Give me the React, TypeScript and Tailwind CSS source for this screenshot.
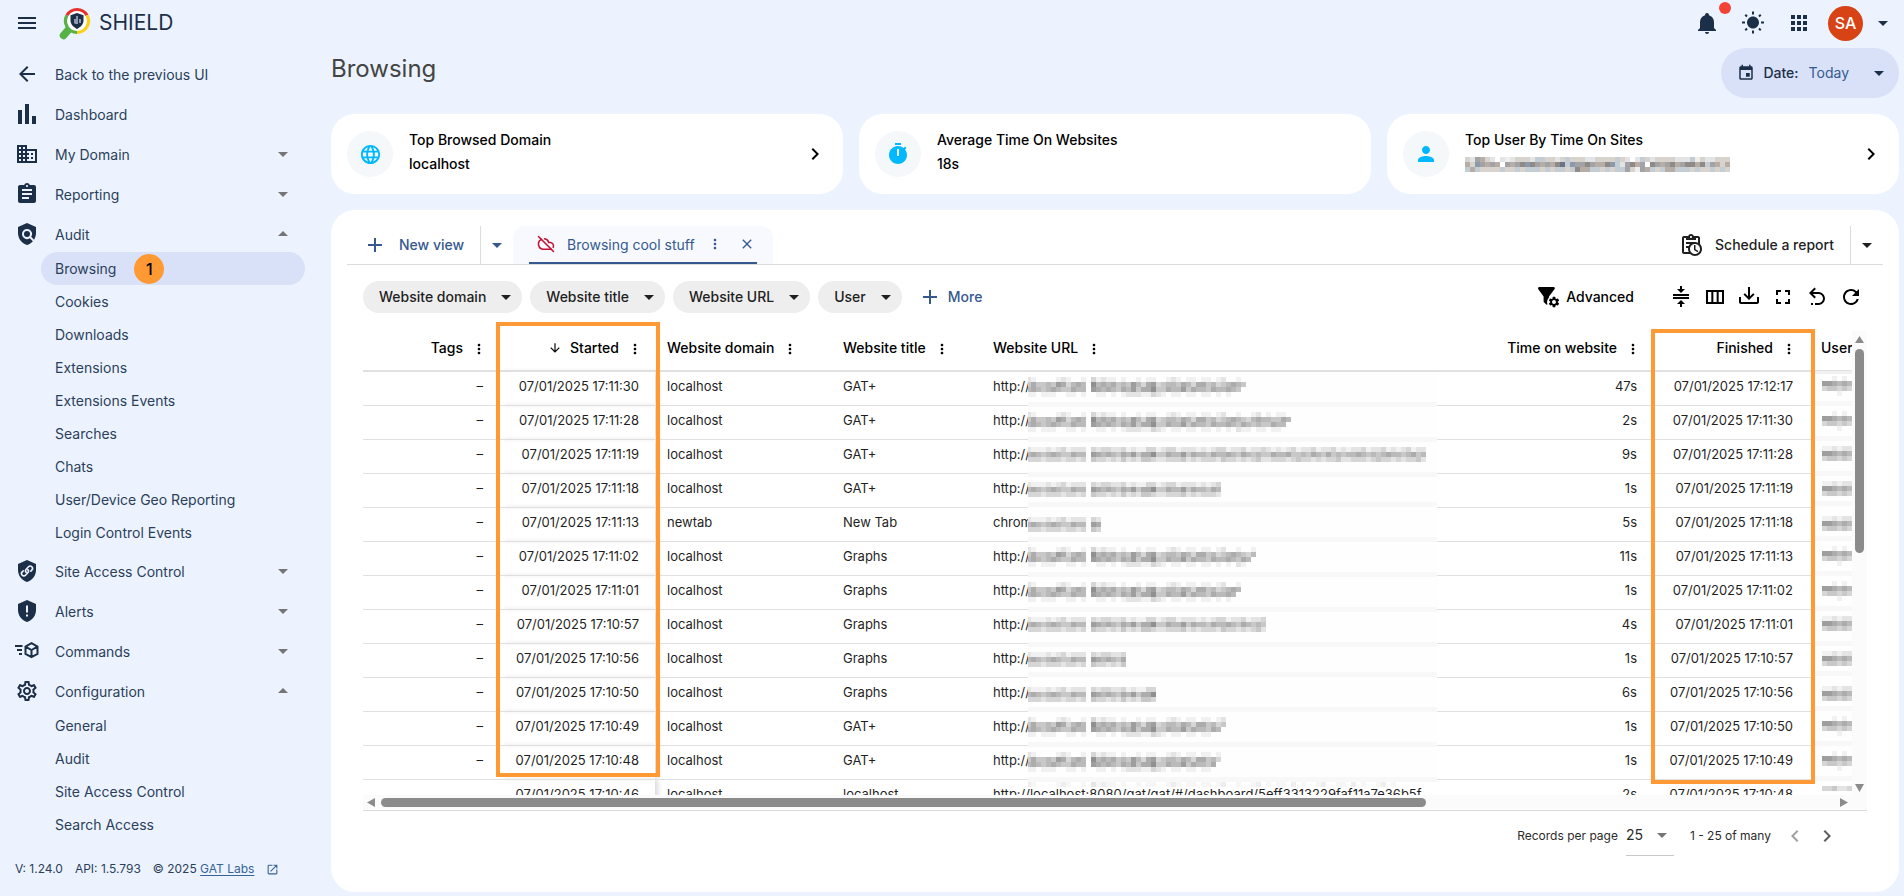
import type { ReactNode } from "react";
import {
  MdApps,
  MdArrowBack,
  MdArrowDownward,
  MdArrowDropDown,
  MdArrowDropUp,
  MdAssignment,
  MdChevronLeft,
  MdChevronRight,
  MdClose,
  MdDomain,
  MdEvent,
  MdFullscreen,
  MdLanguage,
  MdMenu,
  MdMoreVert,
  MdOpenInNew,
  MdOutlineSettings,
  MdOutlineViewColumn,
  MdPerson,
  MdPolicy,
  MdRefresh,
  MdSettings,
  MdWbSunny,
  MdAdd,
} from "react-icons/md";
import { CloudOff } from "lucide-react";

const paths = {
  bell: "M21,19V20H3V19L5,17V11C5,7.9 7.03,5.17 10,4.29C10,4.19 10,4.1 10,4A2,2 0 0,1 12,2A2,2 0 0,1 14,4C14,4.1 14,4.19 14,4.29C16.97,5.17 19,7.9 19,11V17L21,19M14,21A2,2 0 0,1 12,23A2,2 0 0,1 10,21",
  bars: "M3 8h4v14H3zM10 2h4v20h-4zM17 14h4v8h-4z",
  timer:
    "M19.03 7.39L20.45 5.97C20 5.46 19.55 5 19.04 4.56L17.62 6C16.07 4.74 14.12 4 12 4C7.03 4 3 8.03 3 13C3 17.97 7.02 22 12 22C17 22 21 17.97 21 13C21 10.88 20.26 8.93 19.03 7.39M13 14H11V7H13V14M15 1H9V3H15V1Z",
  clipboardClock:
    "M21 11.11V5C21 3.9 20.11 3 19 3H14.82C14.4 1.84 13.3 1 12 1S9.6 1.84 9.18 3H5C3.9 3 3 3.9 3 5V19C3 20.11 3.9 21 5 21H11.11C12.37 22.24 14.09 23 16 23C19.87 23 23 19.87 23 16C23 14.09 22.24 12.37 21 11.11M12 3C12.55 3 13 3.45 13 4S12.55 5 12 5 11 4.55 11 4 11.45 3 12 3M5 19V5H7V7H17V5H19V9.68C18.09 9.25 17.08 9 16 9H7V11H11.1C10.5 11.57 10.04 12.25 9.68 13H7V15H9.08C9.03 15.33 9 15.66 9 16C9 17.08 9.25 18.09 9.68 19H5M16 21C13.24 21 11 18.76 11 16S13.24 11 16 11 21 13.24 21 16 18.76 21 16 21M16.5 16.25L19.36 17.94L18.61 19.16L15 17V12H16.5V16.25Z",
  collapse:
    "M4,12H20V14H4V12M4,9H20V11H4V9M16,4L12,8L8,4H11V1H13V4H16M8,19L12,15L16,19H13V22H11V19H8Z",
  tray: "M2 12H4V17H20V12H22V17C22 18.11 21.11 19 20 19H4C2.9 19 2 18.11 2 17V12M12 15L17.55 9.54L16.13 8.13L13 11.25V2H11V11.25L7.88 8.13L6.46 9.55L12 15Z",
  undo: "M13.5,7A6.5,6.5 0 0,1 20,13.5A6.5,6.5 0 0,1 13.5,20H10V18H13.5C16,18 18,16 18,13.5C18,11 16,9 13.5,9H7.83L10.91,12.09L9.5,13.5L4,8L9.5,2.5L10.92,3.91L7.83,7H13.5M6,18H8V20H6V18Z",
};

function PathIcon({ d }: { d: string }) {
  return (
    <svg viewBox="0 0 24 24" className="size-6 shrink-0" fill="currentColor" aria-hidden="true">
      <path d={d} />
    </svg>
  );
}

function ShieldIcon({ children }: { children: ReactNode }) {
  return (
    <svg viewBox="0 0 24 24" className="size-6 shrink-0" aria-hidden="true">
      <path d="M12 1 3 5v6c0 5.55 3.84 10.74 9 12 5.16-1.26 9-6.45 9-12V5z" fill="currentColor" />
      {children}
    </svg>
  );
}

const linkShield = (
  <ShieldIcon>
    <g fill="none" stroke="#ecf3ff" strokeWidth="1.6" strokeLinecap="round">
      <path d="M11.2 13.4a2.3 2.3 0 0 1 0-3.2l2.3-2.4a2.3 2.3 0 0 1 3.3 3.3l-1 1" />
      <path d="M12.8 10.6a2.3 2.3 0 0 1 0 3.2l-2.3 2.4a2.3 2.3 0 0 1-3.3-3.3l1-1" />
    </g>
  </ShieldIcon>
);

const alertShield = (
  <ShieldIcon>
    <path d="M11 6.500h2v7h-2zM11 15.500h2v2h-2z" fill="#ecf3ff" />
  </ShieldIcon>
);

const commandsIcon = (
  <svg viewBox="0 0 24 24" className="size-6 shrink-0" fill="none" stroke="currentColor" strokeWidth="2" aria-hidden="true">
    <path d="M0 7h7.500M2 11h5M4 15h3" />
    <path d="M16.500 4.200 22.500 7.500v7.300l-6 3.400-6-3.400V7.500zM10.500 7.500l6 3.500 6-3.500M16.500 11v7" />
  </svg>
);

const filterIcon = (
  <svg viewBox="0 0 24 24" className="size-6 shrink-0" fill="currentColor" aria-hidden="true">
    <path d="M2 3.500C2 2.600 2.600 2 3.400 2h14.200c1.100 0 1.700 1.200 1 2.100L13 11.400v1.200a7 7 0 0 0-1.600 6.800c-.5.400-1 .300-1.400-.1l-2-2a1.200 1.200 0 0 1-.4-1v-4.900L2.300 4.300z" />
    <svg x="11.500" y="10.500" width="13" height="13" viewBox="0 0 24 24">
      <MdSettings size={24} />
    </svg>
  </svg>
);

function Logo() {
  return (
    <svg viewBox="0 0 32 34" className="h-[34px] w-8" fill="none" aria-hidden="true">
      <path d="M4.500 29.500 11 22" stroke="#57b246" strokeWidth="7.500" strokeLinecap="round" />
      <circle cx="18" cy="15" r="11" fill="#fff" />
      <path d="M18 26.500A11.500 11.500 0 0 1 8 9.300" stroke="#57b246" strokeWidth="3.200" />
      <path d="M8 9.300A11.500 11.500 0 0 1 28 9.300" stroke="#e5322d" strokeWidth="3.200" />
      <path d="M28 9.300A11.500 11.500 0 0 1 18 26.500" stroke="#fbd116" strokeWidth="3.200" />
      <path d="m18 7 6.500 2.300v5.200c0 3.700-2.800 6.500-6.500 8.500-3.700-2-6.500-4.800-6.500-8.500V9.300z" fill="#1b2f49" />
      <path d="M15 17v-4h2v-3h2v8h-3zM20 13h2v4h-2z" fill="#8b9aae" />
    </svg>
  );
}

type NavItem = {
  label: string;
  icon: ReactNode;
  open?: boolean;
  children?: string[];
};

const nav: NavItem[] = [
  { label: "Back to the previous UI", icon: <MdArrowBack size={24} /> },
  { label: "Dashboard", icon: <PathIcon d={paths.bars} /> },
  { label: "My Domain", icon: <MdDomain size={24} />, open: false },
  { label: "Reporting", icon: <MdAssignment size={24} />, open: false },
  {
    label: "Audit",
    icon: <MdPolicy size={24} />,
    open: true,
    children: [
      "Browsing",
      "Cookies",
      "Downloads",
      "Extensions",
      "Extensions Events",
      "Searches",
      "Chats",
      "User/Device Geo Reporting",
      "Login Control Events",
    ],
  },
  { label: "Site Access Control", icon: linkShield, open: false },
  { label: "Alerts", icon: alertShield, open: false },
  { label: "Commands", icon: commandsIcon, open: false },
  {
    label: "Configuration",
    icon: <MdOutlineSettings size={24} />,
    open: true,
    children: ["General", "Audit", "Site Access Control", "Search Access"],
  },
];

function Sidebar() {
  return (
    <aside className="w-[331px] shrink-0 pr-[26px] text-sm text-[#2b3f5a]">
      <nav className="pt-1.5">
        {nav.map((item) => (
          <div key={item.label} className="pt-1">
            <button className="flex h-9 w-full items-center gap-4 pr-2.5 pl-[15px] text-left">
              <span className="text-[#1b2f49]">{item.icon}</span>
              <span className="flex-1 pt-0.5">{item.label}</span>
              {item.open === true && <MdArrowDropUp size={24} className="text-[#757575]" />}
              {item.open === false && <MdArrowDropDown size={24} className="text-[#757575]" />}
            </button>
            {item.children?.map((child) => (
              <a
                key={child}
                href="#"
                className={
                  child === "Browsing"
                    ? "ml-[41px] flex h-[33px] items-center gap-[18px] rounded-full bg-[#d8e1f8] pl-3.5"
                    : "ml-[41px] flex h-[33px] items-center pl-3.5"
                }
              >
                {child}
                {child === "Browsing" && (
                  <span className="flex size-[30px] items-center justify-center rounded-full bg-[#ff9933] text-base font-medium text-black">
                    1
                  </span>
                )}
              </a>
            ))}
          </div>
        ))}
      </nav>
      <footer className="flex items-center gap-3 pt-5 pl-[15px] text-xs leading-4">
        <span>V: 1.24.0</span>
        <span>API: 1.5.793</span>
        <span>
          © 2025{" "}
          <a href="#" className="text-[#35639b] underline underline-offset-2">
            GAT Labs
          </a>
        </span>
        <MdOpenInNew size={13} className="text-[#35639b]" />
      </footer>
    </aside>
  );
}

function TopBar() {
  return (
    <header className="flex h-[46px] items-center pr-[9px] pl-[15px] text-[#1b2f49]">
      <button aria-label="Menu">
        <MdMenu size={24} />
      </button>
      <div className="ml-5 flex items-center gap-2">
        <Logo />
        <span className="text-[21px]">SHIELD</span>
      </div>
      <div className="ml-auto flex items-center gap-[22px]">
        <button aria-label="Notifications" className="relative">
          <PathIcon d={paths.bell} />
          <span className="absolute -top-[9px] left-6 size-3 rounded-full bg-[#f44336]" />
        </button>
        <button aria-label="Theme">
          <MdWbSunny size={24} />
        </button>
        <button aria-label="Apps">
          <MdApps size={24} />
        </button>
      </div>
      <button className="ml-[17px] flex items-center gap-2">
        <span className="flex size-[35px] items-center justify-center rounded-full bg-[#d84315] text-base font-medium text-white">
          SA
        </span>
        <MdArrowDropDown size={24} />
      </button>
    </header>
  );
}

// Shades of the pixelated blocks, 0 = blank, 9 = darkest
const shadeTop = "21000012100103121101001011001210110110120010012010110201001200110201001201000000";
const shadeMidA = "46445476356508565645475367345546536645345654356554465563456347465554654754655746";
const shadeMidB = "56545654465507656546574668446557465546556546545446556445465464545565454565545645";
const shadeLow = "11011100110100110101222113210110110110101021101101102011010110110110110110110110";
// Softer edge rows for lines where the text falls on a single block row
const shadeSoftTop = "21112123122203233223121133123312221212331223122321212312231223121223122312123122";
const shadeSoftLow = "33323332332304332324232443223334232333243323234223332343323233422333234332323342";
const shadeFill = [
  "#ffffff",
  "#f1f1f1",
  "#e4e4e4",
  "#d6d6d6",
  "#c8c8c8",
  "#bababa",
  "#acacac",
  "#9e9e9e",
  "#909090",
  "#848484",
];

// Block rows are 5px high
const redactedUrls = [
  { row: 1, length: 44 },
  { row: 8, length: 53 },
  { row: 15, length: 80, soft: true },
  { row: 22, length: 39, soft: true },
  { row: 29, length: 15, soft: true },
  { row: 35, length: 46 },
  { row: 42, length: 43 },
  { row: 49, length: 48, soft: true },
  { row: 56, length: 20, soft: true },
  { row: 63, length: 26, soft: true },
  { row: 69, length: 40 },
  { row: 76, length: 39 },
];
const bandRows = [6, 13, 20, 26, 33, 40, 47, 54, 60, 67, 74, 81];

function blockRow(pattern: string, row: number, length: number, key: string) {
  return Array.from({ length }, (_, i) => {
    const shade = Number(pattern[i % pattern.length]);
    if (shade === 0) return null;
    return <rect key={key + i} x={i * 5} y={row * 5} width="5" height="5" fill={shadeFill[shade]} />;
  });
}

function UrlMask() {
  return (
    <svg
      width="409"
      height="423"
      viewBox="2 0 409 423"
      shapeRendering="crispEdges"
      className="absolute top-[41px] left-[665px]"
      aria-hidden="true"
    >
      <rect width="411" height="410" fill="#fefefe" />
      {bandRows.map((row) => (
        <rect key={row} y={row * 5} width="411" height="5" fill="#f8f8f8" />
      ))}
      {redactedUrls.map(({ row, length, soft }) =>
        soft ? (
          <g key={row}>
            {blockRow(shadeSoftTop, row, length, "t")}
            {blockRow(shadeMidB, row + 1, length, "b")}
            {blockRow(shadeSoftLow, row + 2, length, "l")}
          </g>
        ) : (
          <g key={row}>
            {blockRow(shadeTop, row, length, "t")}
            {blockRow(shadeMidA, row + 1, length, "a")}
            {blockRow(shadeMidB, row + 2, length - 1, "b")}
            {blockRow(shadeLow, row + 3, length - 2, "l")}
          </g>
        )
      )}
      <g opacity="0.6">{blockRow(shadeTop, 82, 74, "z")}</g>
    </svg>
  );
}

function UserMask() {
  return (
    <svg
      width="37"
      height="424"
      viewBox="0 0 37 424"
      shapeRendering="crispEdges"
      className="absolute top-10 right-[15px]"
      aria-hidden="true"
    >
      <rect y="2" width="37" height="422" fill="#fefefe" />
      <rect width="37" height="3" fill="#f1f1f1" />
      {bandRows.map((row) => (
        <rect key={row} y={row * 5} width="37" height="5" fill="#f8f8f8" />
      ))}
      <g transform="translate(7 0)">
        {redactedUrls.map(({ row, soft }) => (
          <g key={row}>
            {blockRow(soft ? "112122" : "001010", row, 6, "t")}
            {blockRow("776565", row + 1, 6, "a")}
            {blockRow("344343", row + 2, 6, "b")}
            {!soft && blockRow("000100", row + 3, 6, "l")}
          </g>
        ))}
        {blockRow("334223", 83, 6, "y")}
      </g>
    </svg>
  );
}

const emailTop = "3265320212333244332343332233334320243233332224132233300";
const emailMid = "5386565065678765657948667655784267560765675677574653566";
const emailLow = "4543333433434443434434755443434463165434554443433434333";
const tint = ["#ffffff", "#efeeec", "#e2e4e6", "#d8d3cd", "#c4cdd3", "#b6aea6", "#a3a3a5", "#8f8a85", "#8c99a8", "#6b7486"];

function RedactedEmail() {
  return (
    <svg width="265" height="15" viewBox="0 0 265 15" shapeRendering="crispEdges" role="img" aria-label="Redacted user">
      {[emailTop, emailMid, emailLow].map((line, y) =>
        [...line.slice(0, 53)].map((c, x) => (
          <rect key={`${x}-${y}`} x={x * 5} y={y * 5} width="5" height="5" fill={tint[Number(c)]} />
        ))
      )}
    </svg>
  );
}

type StatCardProps = {
  icon: ReactNode;
  title: string;
  value: ReactNode;
  link?: boolean;
};

function StatCard({ icon, title, value, link }: StatCardProps) {
  return (
    <div className="flex h-20 flex-1 items-center rounded-3xl bg-white px-4">
      <span className="flex size-[46px] items-center justify-center rounded-full bg-[#f4f8fb] text-[#00b8ff]">{icon}</span>
      <div className="ml-4 flex-1 pb-1 text-sm font-medium text-black">
        <div className="leading-6">{title}</div>
        <div className="flex h-6 items-center leading-6">{value}</div>
      </div>
      {link && (
        <button aria-label={title}>
          <MdChevronRight size={24} className="text-black" />
        </button>
      )}
    </div>
  );
}

const started = [
  "17:11:30",
  "17:11:28",
  "17:11:19",
  "17:11:18",
  "17:11:13",
  "17:11:02",
  "17:11:01",
  "17:10:57",
  "17:10:56",
  "17:10:50",
  "17:10:49",
  "17:10:48",
  "17:10:46",
];
const titles = ["GAT+", "GAT+", "GAT+", "GAT+", "New Tab", "Graphs", "Graphs", "Graphs", "Graphs", "Graphs", "GAT+", "GAT+", "localhost"];
const durations = ["47s", "2s", "9s", "1s", "5s", "11s", "1s", "4s", "1s", "6s", "1s", "1s", "2s"];

const rows = started.map((time, i) => ({
  tags: i === 12 ? "" : "–",
  started: `07/01/2025 ${time}`,
  domain: i === 4 ? "newtab" : "localhost",
  title: titles[i],
  url:
    i === 12
      ? "http://localhost:8080/gat/gat/#/dashboard/5eff3313229faf11a7e36b5f"
      : i === 4
        ? "chrome://"
        : "http://",
  duration: durations[i],
  finished: `07/01/2025 ${i === 0 ? "17:12:17" : started[i - 1]}`,
}));

const columns = [
  { label: "Tags", width: "w-[136px]", right: true },
  { label: "Started", width: "w-[156px]", right: true, sorted: true },
  { label: "Website domain", width: "w-[176px]" },
  { label: "Website title", width: "w-[150px]" },
  { label: "Website URL", width: "" },
  { label: "Time on website", width: "w-[180px]", right: true },
  { label: "Finished", width: "w-[156px]", right: true },
  { label: "User", width: "w-[43px]" },
];

function BrowsingTable() {
  return (
    <div className="relative mx-4 mt-[18px]">
      <div className="flex h-[464px]">
        <div className="min-w-0 flex-1 overflow-hidden">
          <table className="w-full table-fixed border-collapse whitespace-nowrap">
            <thead>
              <tr className="h-10 border-b-2 border-[#e0e0e0] text-sm">
                {columns.map((col) => (
                  <th key={col.label} scope="col" className={`${col.width} overflow-hidden p-0 pb-1.5 pl-3 font-medium text-black`}>
                    <span className={col.right ? "flex items-center justify-end pr-3" : "flex items-center"}>
                      {col.sorted && <MdArrowDownward size={14} className="mr-2" />}
                      {col.label}
                      {col.label !== "User" && (
                        <button aria-label={`${col.label} menu`} className="ml-2 pt-0.5">
                          <MdMoreVert size={16} />
                        </button>
                      )}
                    </span>
                  </th>
                ))}
              </tr>
            </thead>
            <tbody className="text-[13px] text-[#1f1f1f]">
              {rows.map((row) => (
                <tr key={row.started} className="h-[34px] border-b border-[#e0e0e0]">
                  <td className="p-0 pr-4 pb-[3px] text-right">{row.tags}</td>
                  <td className="p-0 pr-4 pb-[3px] text-right shadow-[4px_0_5px_-1px_rgba(0,0,0,0.15)]">{row.started}</td>
                  <td className="p-0 pb-[3px] pl-3">{row.domain}</td>
                  <td className="p-0 pb-[3px] pl-3">{row.title}</td>
                  <td className="overflow-hidden p-0 pb-[3px] pl-3">{row.url}</td>
                  <td className="p-0 pr-4 pb-[3px] text-right">{row.duration}</td>
                  <td className="p-0 pr-4 pb-[3px] text-right">{row.finished}</td>
                  <td className="p-0" />
                </tr>
              ))}
            </tbody>
          </table>
        </div>
        <div className="flex w-[15px] flex-col items-center bg-[#fbfbfb] text-[#8b8b8b]">
          <svg width="9" height="18" viewBox="0 0 9 18" fill="currentColor" aria-hidden="true">
            <path d="M4.500 5 9 12H0z" />
          </svg>
          <div className="h-[204px] w-[9px] rounded-full bg-[#8b8b8b]" />
          <svg width="9" height="18" viewBox="0 0 9 18" fill="currentColor" className="mt-auto" aria-hidden="true">
            <path d="M0 7h9l-4.500 8z" />
          </svg>
        </div>
      </div>
      <div className="flex h-4 items-center border-b border-[#dcdcdc] bg-[#fbfbfb] pr-[19px] pl-1 text-[#8b8b8b]">
        <svg width="8" height="9" viewBox="0 0 8 9" fill="currentColor" aria-hidden="true">
          <path d="M8 0v9L0 4.500z" />
        </svg>
        <div className="ml-1.5 h-[9px] w-12/17 rounded-full bg-[#8b8b8b]" />
        <svg width="8" height="9" viewBox="0 0 8 9" fill="currentColor" className="ml-auto" aria-hidden="true">
          <path d="M0 0v9l8-4.500z" />
        </svg>
      </div>
      <UrlMask />
      <UserMask />
      <div className="pointer-events-none absolute -top-[9px] left-[133px] h-[455px] w-[164px] border-4 border-[#ff9933]" />
      <div className="pointer-events-none absolute -top-0.5 right-[52px] h-[455px] w-[164px] border-4 border-[#ff9933]" />
    </div>
  );
}

function FilterChip({ label }: { label: string }) {
  return (
    <button className="flex h-8 items-center gap-2 rounded-full bg-[#eeeeee] pr-1 pl-4 font-medium text-[#1f1f1f]">
      {label}
      <MdArrowDropDown size={24} />
    </button>
  );
}

export default function App() {
  return (
    <div className="flex min-h-screen flex-col bg-[#ecf3ff] font-['Inter',sans-serif]">
      <TopBar />
      <div className="flex flex-1">
        <Sidebar />
        <main className="flex min-w-0 flex-1 flex-col pt-0.5 pr-[5px] pb-1">
          <div className="flex items-start justify-between">
            <h1 className="pt-[5px] text-2xl text-[#444444]">Browsing</h1>
            <button className="flex h-[50px] items-center rounded-full bg-[#d8e1f8] pr-2 pl-4 text-sm text-[#1b2f49]">
              <MdEvent size={18} />
              <span className="ml-2 font-medium">Date:</span>
              <span className="mr-[18px] ml-2.5 text-[#35598f]">Today</span>
              <MdArrowDropDown size={24} />
            </button>
          </div>

          <div className="mt-4 flex gap-4">
            <StatCard icon={<MdLanguage size={23} />} title="Top Browsed Domain" value="localhost" link />
            <StatCard icon={<PathIcon d={paths.timer} />} title="Average Time On Websites" value="18s" />
            <StatCard icon={<MdPerson size={24} />} title="Top User By Time On Sites" value={<RedactedEmail />} link />
          </div>

          <section className="mt-4 flex-1 rounded-3xl bg-white p-4 text-sm">
            <div className="flex h-[39px] border-b border-[#dcdcdc]">
              <button className="flex items-center border-r border-[#dcdcdc] pr-4 pl-4 font-medium text-[#35598f]">
                <MdAdd size={24} className="mr-3" />
                New view
              </button>
              <button aria-label="Views" className="mr-1 ml-1 px-0 text-[#35598f]">
                <MdArrowDropDown size={24} />
              </button>
              <div className="rounded-t-xl bg-[#f7f9ff] px-4">
                <div className="flex h-[38px] items-center border-b-2 border-[#35598f] pr-0.5 pl-2 text-[#35598f]">
                  <CloudOff size={18} strokeWidth={2} className="text-[#c4102f]" />
                  <span className="ml-3 pt-0.5">Browsing cool stuff</span>
                  <button aria-label="View options" className="ml-3">
                    <MdMoreVert size={16} />
                  </button>
                  <button aria-label="Close view" className="ml-4">
                    <MdClose size={16} />
                  </button>
                </div>
              </div>
              <button className="ml-auto flex items-center gap-3 border-r border-[#dcdcdc] pr-4 font-medium text-[#1f1f1f]">
                <PathIcon d={paths.clipboardClock} />
                Schedule a report
              </button>
              <button aria-label="Report options" className="pr-1 pl-1 text-[#1f1f1f]">
                <MdArrowDropDown size={24} />
              </button>
            </div>

            <div className="mt-4 flex items-center gap-2 pr-4 pl-4">
              <FilterChip label="Website domain" />
              <FilterChip label="Website title" />
              <FilterChip label="Website URL" />
              <FilterChip label="User" />
              <button className="ml-2 flex items-center gap-1.5 font-medium text-[#35598f]">
                <MdAdd size={24} />
                More
              </button>
              <button className="ml-auto flex items-center gap-1.5 font-medium text-black">
                {filterIcon}
                Advanced
              </button>
              <div className="ml-[27px] flex items-center gap-2.5 pr-1 text-black">
                <button aria-label="Density">
                  <PathIcon d={paths.collapse} />
                </button>
                <button aria-label="Columns">
                  <MdOutlineViewColumn size={24} />
                </button>
                <button aria-label="Export">
                  <PathIcon d={paths.tray} />
                </button>
                <button aria-label="Fullscreen">
                  <MdFullscreen size={24} />
                </button>
                <button aria-label="Reset">
                  <PathIcon d={paths.undo} />
                </button>
                <button aria-label="Refresh">
                  <MdRefresh size={24} />
                </button>
              </div>
            </div>

            <BrowsingTable />

            <div className="mr-11 flex items-center justify-end pt-1 text-xs text-[#2b2b2b]">
              <label htmlFor="per-page">Records per page</label>
              <div className="relative ml-2 border-b border-[#c8c8c8]">
                <select id="per-page" className="h-10 w-12 appearance-none bg-transparent text-sm" defaultValue="25">
                  <option>25</option>
                  <option>50</option>
                </select>
                <MdArrowDropDown size={24} className="pointer-events-none absolute top-2 right-0 text-[#757575]" />
              </div>
              <span className="ml-4">1 - 25 of many</span>
              <button aria-label="Previous page" className="ml-3">
                <MdChevronLeft size={24} className="text-[#a0a0a0]" />
              </button>
              <button aria-label="Next page" className="ml-2">
                <MdChevronRight size={24} className="text-[#5f5f5f]" />
              </button>
            </div>
          </section>
        </main>
      </div>
    </div>
  );
}
